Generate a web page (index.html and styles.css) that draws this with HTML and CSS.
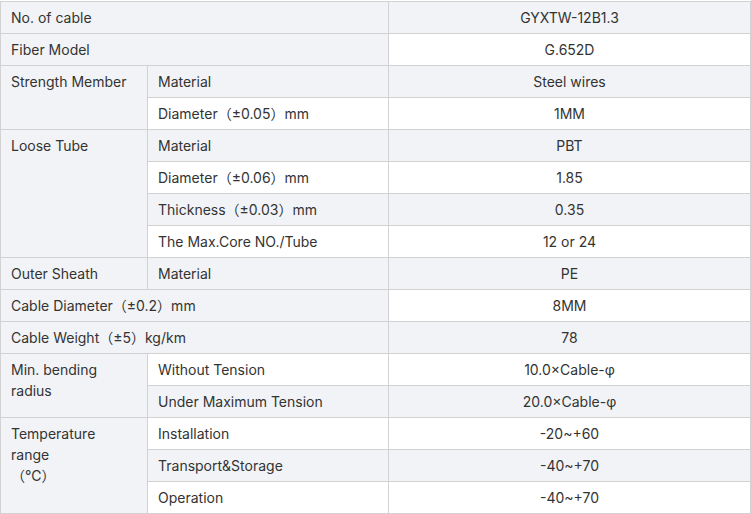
FILE: index.html
```html
<!DOCTYPE html>
<html lang="en">
<head>
<meta charset="utf-8">
<title>GYXTW-12B1.3</title>
<link rel="stylesheet" href="styles.css">
</head>
<body>
<table class="spec">
  <colgroup>
    <col class="c1">
    <col class="c2">
    <col class="c3">
  </colgroup>
  <tbody>
    <tr><th colspan="2">No. of cable</th><td class="val">GYXTW-12B1.3</td></tr>
    <tr><th colspan="2">Fiber Model</th><td class="val">G.652D</td></tr>
    <tr><th rowspan="2">Strength Member</th><td>Material</td><td class="val">Steel wires</td></tr>
    <tr><td>Diameter（±0.05）mm</td><td class="val">1MM</td></tr>
    <tr><th rowspan="4">Loose Tube</th><td>Material</td><td class="val">PBT</td></tr>
    <tr><td>Diameter（±0.06）mm</td><td class="val">1.85</td></tr>
    <tr><td>Thickness（±0.03）mm</td><td class="val">0.35</td></tr>
    <tr><td>The Max.Core NO./Tube</td><td class="val">12 or 24</td></tr>
    <tr><th>Outer Sheath</th><td>Material</td><td class="val">PE</td></tr>
    <tr><th colspan="2">Cable Diameter（±0.2）mm</th><td class="val">8MM</td></tr>
    <tr><th colspan="2">Cable Weight（±5）kg/km</th><td class="val">78</td></tr>
    <tr><th rowspan="2">Min. bending<br>radius</th><td>Without Tension</td><td class="val">10.0×Cable-φ</td></tr>
    <tr><td>Under Maximum Tension</td><td class="val">20.0×Cable-φ</td></tr>
    <tr><th rowspan="3">Temperature<br>range<br>（℃）</th><td>Installation</td><td class="val">-20~+60</td></tr>
    <tr><td>Transport&amp;Storage</td><td class="val">-40~+70</td></tr>
    <tr><td>Operation</td><td class="val">-40~+70</td></tr>
  </tbody>
</table>
</body>
</html>
```

FILE: styles.css
```css
html, body {
  margin: 0;
  padding: 0;
  background: #ffffff;
}

body {
  padding-top: 1px;
  font-family: Inter, "Noto Sans CJK SC", "Noto Sans", sans-serif;
  font-size: 14px;
  color: #333333;
}

.spec {
  border-collapse: collapse;
  table-layout: fixed;
  width: 750px;
}

.c1 { width: 147px; }
.c2 { width: 241px; }
.c3 { width: 362px; }

.spec tr {
  height: 32px;
}

.spec th,
.spec td {
  border: 1px solid #d2d2d2;
  padding: 5px 10px;
  line-height: 21px;
  text-align: left;
  font-weight: 400;
  vertical-align: middle;
}

.spec th {
  background: #f2f3f6;
}

.spec th[rowspan] {
  vertical-align: top;
}

.spec tr:nth-child(odd) td {
  background: #f2f3f6;
}

.spec td.val {
  text-align: center;
}
```
